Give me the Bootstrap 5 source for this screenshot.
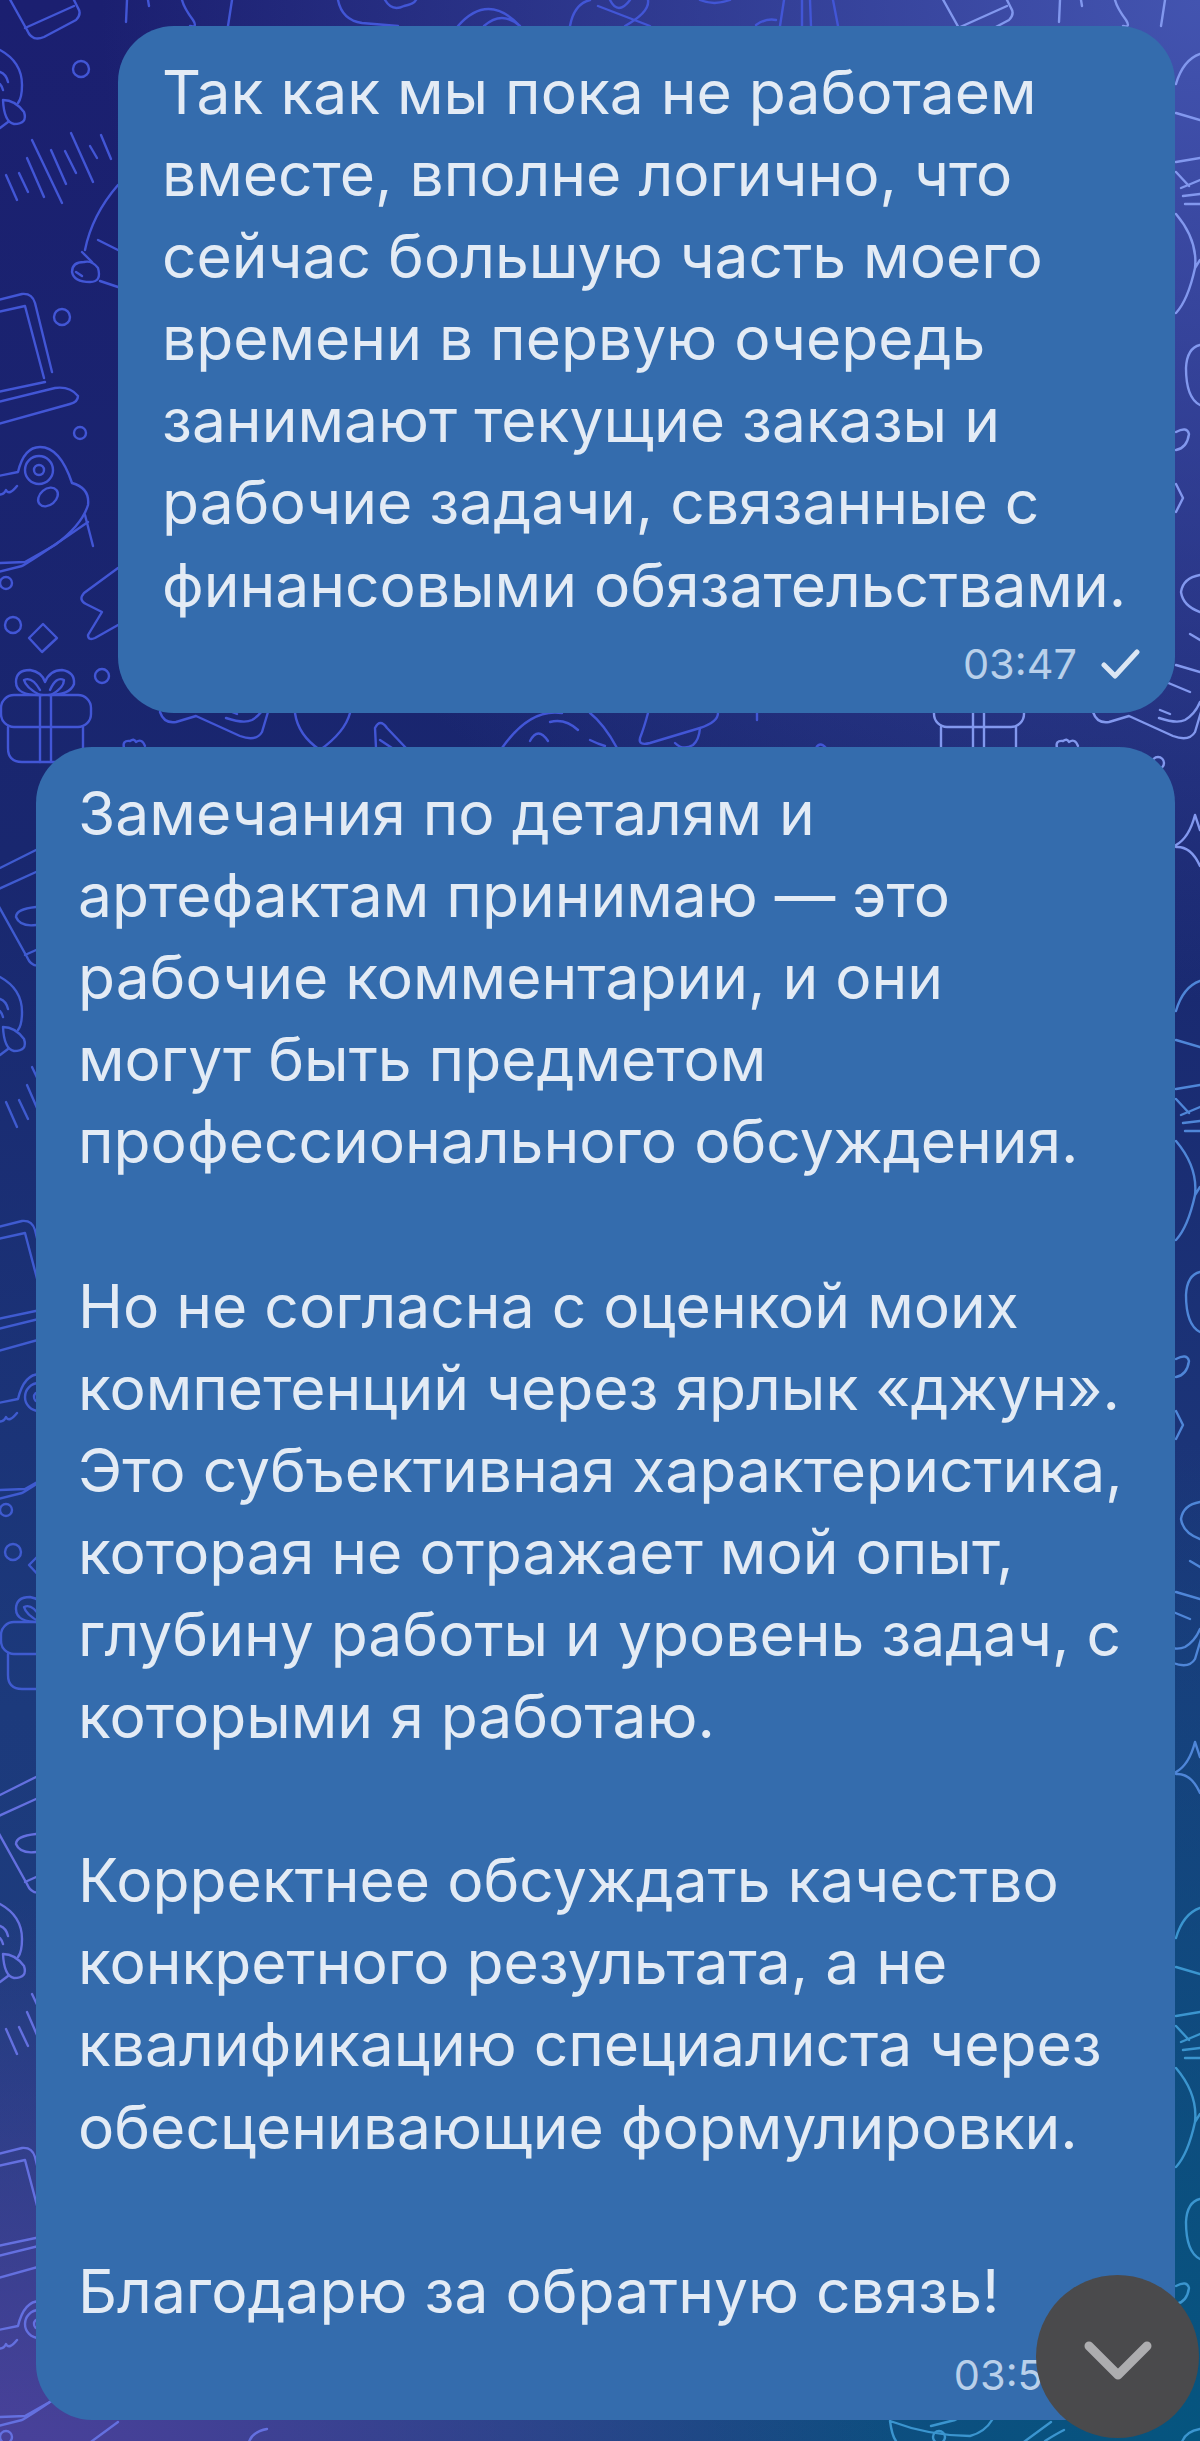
<!DOCTYPE html>
<html lang="ru">
<head>
  <meta charset="UTF-8" />
  <title>Чат</title>
  <link href="https://cdn.jsdelivr.net/npm/bootstrap@5.3.3/dist/css/bootstrap.min.css" rel="stylesheet">
  <style>
    html, body { height: 100%; }
    body { overflow: hidden; background: #1a2470; }
    .chat-screen {
      height: 2441px; padding: 26px 25px 21px 36px;
      background:
        radial-gradient(900px 600px at 0 2500px, #4d419c 0%, rgba(77,65,156,0) 100%),
        radial-gradient(1000px 1000px at 1200px 2441px, #05557f 0%, rgba(5,85,127,0) 100%),
        radial-gradient(1100px 1000px at 1200px 0, #4354b0 0%, rgba(67,84,176,0) 100%),
        linear-gradient(180deg, #1b1f70 0%, #19276f 35%, #1c3a7c 70%, #1f3f80 100%);
    }
    .doodles { top: 0; left: 0; }
    .bubble {
      background: #346cad; color: #e3ebf5; border-radius: 56px;
      font-family: Inter, Roboto, "Liberation Sans", sans-serif; font-size: 60.5px; line-height: 82.1px;
    }
    .bubble-out { margin-left: 82px; height: 687px; padding: 25px 44px 0; }
    .bubble-in { height: 1673px; padding: 25px 42px 0; margin-top: 34px; }
    .msg-meta { color: #b9d0ea; font-size: 41.5px; line-height: 48px; }
    .bubble-out .msg-meta { margin-right: -10px; margin-top: 14px; }
    .bubble-in .msg-meta { margin-right: 64px; margin-top: 19px; }
    .scroll-btn { right: 1px; bottom: 3px; width: 163px; height: 163px; background: #4a4a4c; }
  </style>
</head>
<body>
  <div class="chat-screen position-relative d-flex flex-column">
    <svg class="doodles position-absolute" width="1200" height="2441" fill="none" stroke-width="2.4" stroke-linecap="round" stroke-linejoin="round">
      <defs>
        <g id="tile">
          <!-- card -->
          <path d="M-8 -55 L36 -77 M-8 -35 L36 -55 M-2 -22 L27 30 Q32 42 44 37 L76 20 Q82 14 78 8 L70 -8"/>
          <path d="M25 28 L74 6"/>
          <path d="M36 -20 Q16 -18 16 -10 Q20 0 36 -2"/>
          <circle cx="81" cy="69" r="8"/>
          <!-- bird -->
          <path d="M0 50 Q22 62 22 85 Q22 98 18 103"/>
          <path d="M3 100 Q15 100 24 112 Q28 124 14 124 Q4 122 3 100z"/>
          <path d="M0 128 L8 122"/>
          <path d="M0 72 Q6 74 8 82 M0 84 Q2 86 3 90"/>
          <!-- sound wave -->
          <path d="M32 140L62 203M27 158L44 197M51 150L66 184M65 151L76 173M71 133L93 182M90 146L97 158M101 135L111 159M19 173L28 192M6 175L17 200"/>
          <!-- creature -->
          <path d="M118 185 Q92 215 85 250"/>
          <path d="M84 262 Q72 262 72 272 Q74 282 90 282 Q102 282 98 268 Q92 260 84 262z"/>
          <path d="M100 281 L118 287 M98 240 L118 250 M82 252 L92 262 M76 272 L82 276"/>
          <!-- laptop -->
          <path d="M-2 300 L22 294 Q32 293 35 303 L52 372"/>
          <path d="M-2 312 L25 306 L44 378"/>
          <path d="M-2 392 L45 382 M-2 402 L55 388 Q70 386 78 396 Q78 402 70 404 L-2 424"/>
          <circle cx="62" cy="317" r="8"/>
          <circle cx="80" cy="433" r="6"/>
          <!-- frog -->
          <path d="M-2 476 L18 472 Q24 447 40 447 Q60 447 72 483 Q90 488 88 505 Q82 525 55 545 L25 562 L-2 563"/>
          <path d="M-2 572 L22 566 Q30 562 88 522"/>
          <path d="M85 515 L93 546"/>
          <circle cx="39" cy="470" r="14"/>
          <circle cx="39" cy="470" r="5"/>
          <ellipse cx="48" cy="497" rx="11" ry="8" transform="rotate(-40 48 497)"/>
          <path d="M-2 494 Q3 496 6 490 Q9 496 17 486"/>
          <circle cx="6" cy="583" r="6"/>
          <circle cx="13" cy="625" r="8"/>
          <path d="M43 624 L57 638 L42 652 L29 638z"/>
          <path d="M118 568 L84 593 Q78 600 86 604 L102 612 L88 635 Q88 641 95 638 L118 625"/>
          <circle cx="102" cy="676" r="7"/>
          <!-- gift -->
          <rect x="1" y="695" width="90" height="32" rx="13"/>
          <path d="M8 727 V748 Q8 762 22 762 H70 Q83 762 83 748 V727"/>
          <path d="M40 695 V762 M51 695 V762"/>
          <path d="M42 695 Q16 696 16 682 Q16 670 30 670 Q42 672 45 682 Q50 670 62 670 Q75 672 74 684 Q70 695 49 695"/>
          <path d="M40 695 Q26 688 24 680 Q32 676 40 690 M51 695 Q64 688 64 680 Q56 676 50 690"/>
          <!-- below the first bubble -->
          <path d="M160 712 Q164 724 176 722 L196 716 L240 736 Q256 742 262 732 L268 712"/>
          <path d="M124 748 Q122 740 130 741 Q134 738 136 742 Q142 738 145 746"/>
          <path d="M295 713 Q298 735 320 750 Q345 732 350 713"/>
          <path d="M376 748 L375 728 Q380 718 387 728 L406 748 M380 740 L392 748"/>
          <path d="M502 748 Q530 708 562 713 M617 748 Q604 724 590 713"/>
          <path d="M550 722 Q565 718 578 730 M530 741 Q538 726 548 741 M590 740 Q598 744 605 746"/>
          <path d="M648 713 Q644 728 640 738 Q638 746 650 743 L700 728 Q718 722 718 713"/>
          <path d="M675 743 Q683 751 693 745 Q699 740 700 728"/>
          <path d="M757 713 L757 720"/>
          <path d="M816 748 Q820 741 826 748"/>
          <!-- top strip -->
          <path d="M127 0 L126 22 M182 0 Q184 8 193 20 Q198 28 190 26 M232 0 L228 26 M148 0 L149 6"/>
          <path d="M338 0 Q342 20 362 23 L398 26 M385 0 Q392 12 404 6 Q414 4 416 0"/>
          <path d="M458 26 Q488 -8 520 26 M484 26 Q502 10 520 26"/>
          <path d="M570 26 Q574 4 590 0 M598 6 L650 26 M625 26 Q650 12 648 0 M610 0 Q618 16 630 0"/>
          <path d="M700 0 Q714 6 730 0"/>
          <path d="M756 25 Q766 18 776 20 M780 26 L784 0 M802 0 V26 M810 0 L811 26 M833 0 L838 26"/>
          <!-- right edge -->
          <path d="M243 84 Q250 60 267 54 M243 113 L267 120"/>
          <path d="M243 162 L267 158 M243 172 L256 186 M248 188 L267 180 M250 196 L267 194 M252 204 L267 204 M243 214 Q265 240 262 268 Q255 300 243 313 M262 268 L267 260"/>
          <path d="M267 345 Q254 348 253 368 Q253 398 267 405"/>
          <path d="M243 432 Q254 426 256 434 Q254 448 243 450"/>
          <path d="M243 484 L250 498 L243 512"/>
          <path d="M267 575 Q250 578 248 592 Q250 606 267 612 M257 634 L267 640"/>
          <path d="M243 665 L267 672 M233 682 L257 692 M227 710 L237 714 M226 718 Q244 724 252 720 Q262 714 267 702"/>
          <path d="M243 845 Q256 838 262 815 L267 830 M243 847 Q258 846 267 866"/>
          <circle cx="225" cy="763" r="6"/>
        </g>
      </defs>
      <use href="#tile" stroke="#4256d6"/>
      <use href="#tile" y="927" stroke="#3f5bd0"/>
      <use href="#tile" y="1854" stroke="#6470e0"/>
      <use href="#tile" x="933" stroke="#8298ee"/>
      <use href="#tile" x="933" y="927" stroke="#4f86d8"/>
      <use href="#tile" x="933" y="1854" stroke="#3b95cf"/>
      <path stroke="#3b95cf" d="M890 2421 Q892 2436 896 2441 M890 2421 Q930 2436 970 2436 Q985 2432 992 2420 M1045 2441 Q1056 2434 1064 2430"/>
    </svg>

    <div class="bubble bubble-out position-relative">
      Так как мы пока не работаем<br>
      вместе, вполне логично, что<br>
      сейчас большую часть моего<br>
      времени в первую очередь<br>
      занимают текущие заказы и<br>
      рабочие задачи, связанные с<br>
      финансовыми обязательствами.
      <div class="msg-meta d-flex justify-content-end align-items-center gap-4">
        <span>03:47</span>
        <svg width="40" height="32" viewBox="0 0 40 32" fill="none" stroke="#dbe6f3" stroke-width="5" stroke-linecap="round" stroke-linejoin="round"><path d="M3 17 L14 28 L36 4"/></svg>
      </div>
    </div>

    <div class="bubble bubble-in position-relative">
      Замечания по деталям и<br>
      артефактам принимаю — это<br>
      рабочие комментарии, и они<br>
      могут быть предметом<br>
      профессионального обсуждения.<br>
      <br>
      Но не согласна с оценкой моих<br>
      компетенций через ярлык «джун».<br>
      Это субъективная характеристика,<br>
      которая не отражает мой опыт,<br>
      глубину работы и уровень задач, с<br>
      которыми я работаю.<br>
      <br>
      Корректнее обсуждать качество<br>
      конкретного результата, а не<br>
      квалификацию специалиста через<br>
      обесценивающие формулировки.<br>
      <br>
      Благодарю за обратную связь!
      <div class="msg-meta d-flex justify-content-end"><span>03:50</span></div>
    </div>

    <div class="scroll-btn position-absolute rounded-circle d-flex align-items-center justify-content-center">
      <svg class="mt-2" width="68" height="40" viewBox="0 0 68 40" fill="none" stroke="#adadaf" stroke-width="9" stroke-linecap="round" stroke-linejoin="round"><path d="M5 5 L34 34 L63 5"/></svg>
    </div>
  </div>
  <script src="https://cdn.jsdelivr.net/npm/bootstrap@5.3.3/dist/js/bootstrap.bundle.min.js"></script>
</body>
</html>
